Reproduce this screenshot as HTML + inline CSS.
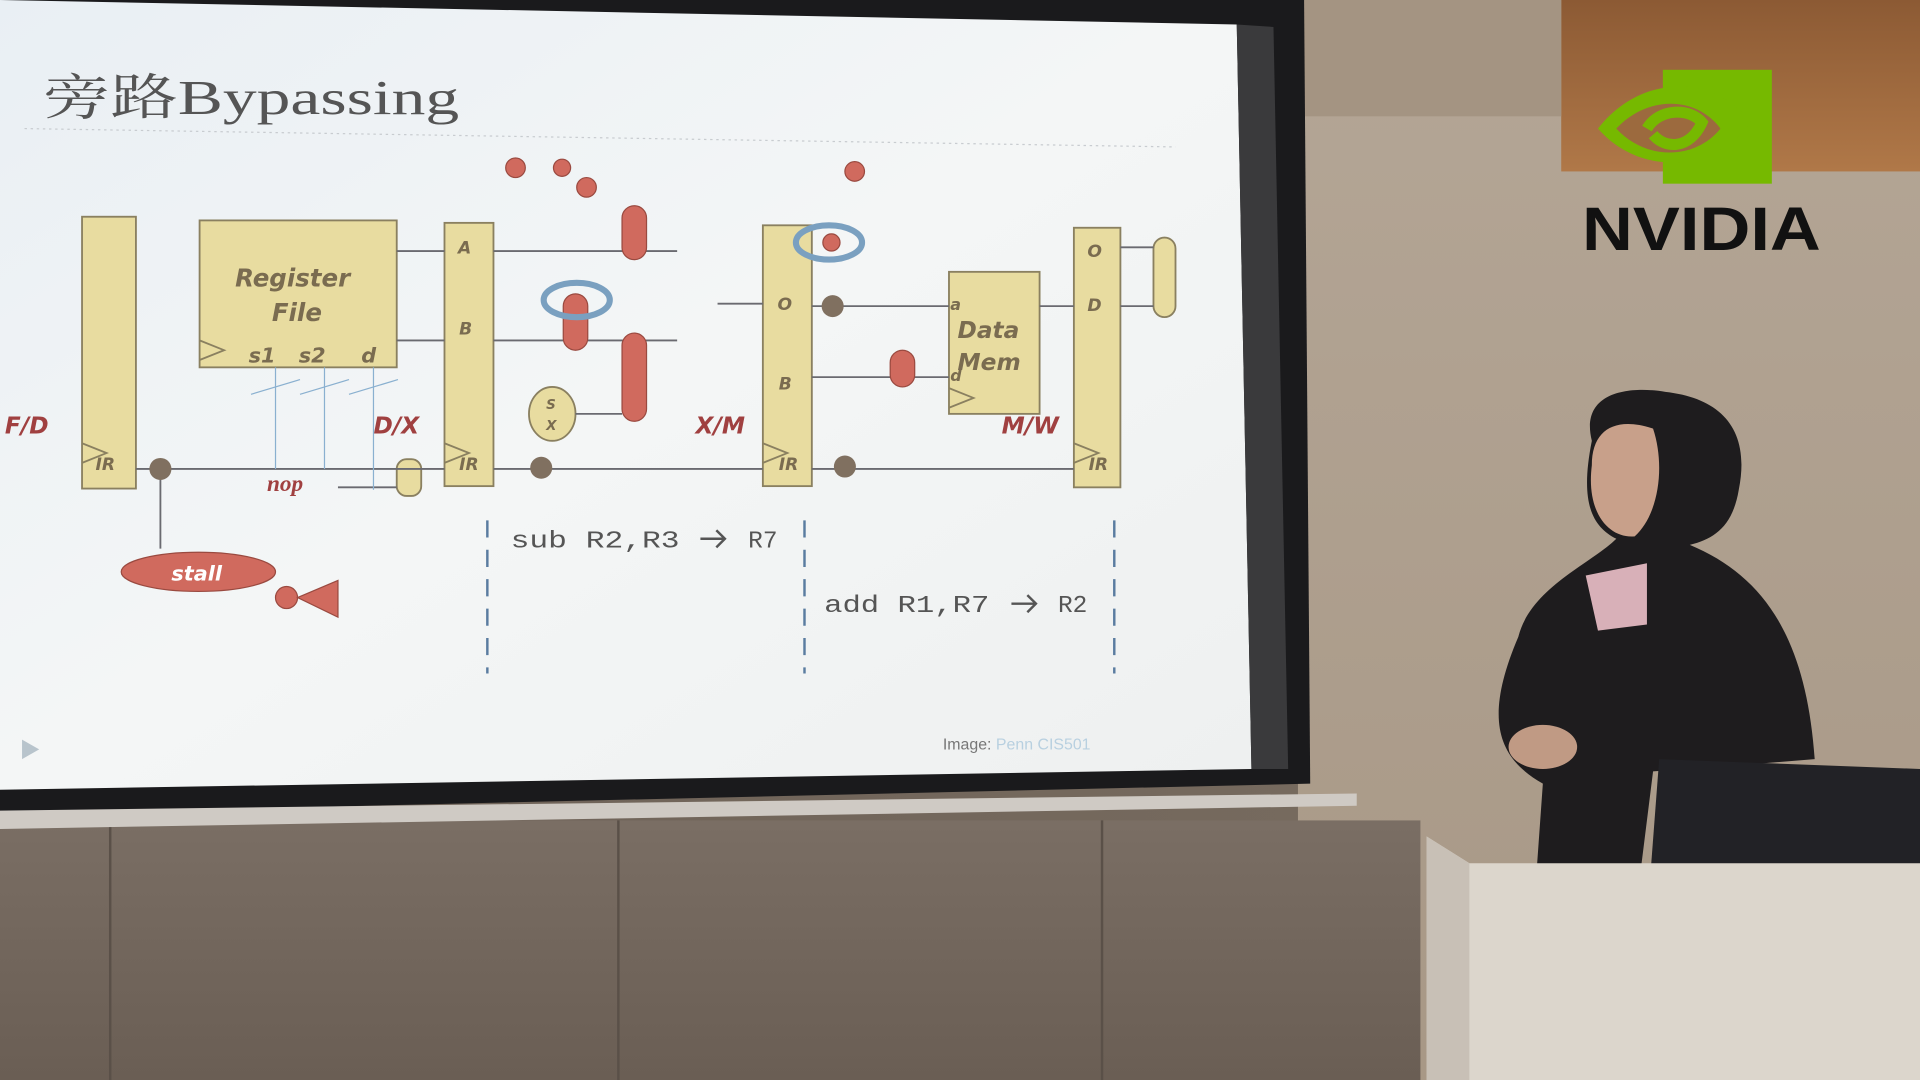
<!DOCTYPE html>
<html><head><meta charset="utf-8"><style>
html,body{margin:0;padding:0;width:1920px;height:1080px;overflow:hidden;background:#8a7c6e}
svg{display:block}
.it{font-family:"DejaVu Sans","Liberation Sans",sans-serif;font-style:italic;font-weight:bold}
.mono{font-family:"Liberation Mono",monospace}
</style></head><body>
<svg width="1920" height="1080" viewBox="0 0 1568 882" preserveAspectRatio="none" xmlns="http://www.w3.org/2000/svg">
<defs>
<linearGradient id="wall" x1="0" y1="0" x2="1" y2="0"><stop offset="0" stop-color="#6c6056"/><stop offset="0.7" stop-color="#766a5e"/><stop offset="1" stop-color="#8a7c6c"/></linearGradient>
<linearGradient id="rw" x1="0" y1="0" x2="0" y2="1"><stop offset="0" stop-color="#b4a696"/><stop offset="1" stop-color="#a89886"/></linearGradient>
<linearGradient id="slide" x1="0" y1="0" x2="1" y2="1"><stop offset="0" stop-color="#e9eff4"/><stop offset="0.5" stop-color="#f4f6f6"/><stop offset="1" stop-color="#eef0f0"/></linearGradient>
<linearGradient id="top" x1="0" y1="0" x2="0" y2="1"><stop offset="0" stop-color="#8c5a34"/><stop offset="1" stop-color="#b07848"/></linearGradient>
<linearGradient id="lw" x1="0" y1="0" x2="0" y2="1"><stop offset="0" stop-color="#7a6e64"/><stop offset="1" stop-color="#6a5e54"/></linearGradient>
</defs>
<rect width="1568" height="882" fill="url(#wall)"/>
<rect x="1060" y="0" width="508" height="882" fill="url(#rw)"/>
<rect x="1275" y="0" width="293" height="140" fill="url(#top)"/>
<rect x="1060" y="0" width="215" height="95" fill="#a49482"/>
<rect x="0" y="670" width="1160" height="212" fill="url(#lw)"/>
<line x1="90" y1="670" x2="90" y2="882" stroke="#5a5048" stroke-width="2"/>
<line x1="505" y1="670" x2="505" y2="882" stroke="#5a5048" stroke-width="2"/>
<line x1="900" y1="670" x2="900" y2="882" stroke="#5a5048" stroke-width="2"/>
<polygon points="0,0 1065,0 1070,640 0,665" fill="#1a1a1c"/>
<polygon points="0,662 1108,648 1108,658 0,677" fill="#cfcac4"/>
<polygon points="0,0 1010,20 1022,628 0,645" fill="url(#slide)"/>
<polygon points="1010,20 1040,22 1052,628 1022,628" fill="#3a3a3c"/>
<text x="35" y="93" font-family="'Liberation Serif','Noto Serif CJK SC',serif" font-size="40" fill="#555" textLength="340" lengthAdjust="spacingAndGlyphs">旁路Bypassing</text>
<line x1="20" y1="105" x2="960" y2="120" stroke="#c8ccd0" stroke-dasharray="2,3"/>
<g fill="#e8dca0" stroke="#8a8060" stroke-width="1.5">
<rect x="67" y="177" width="44" height="222"/>
<rect x="163" y="180" width="161" height="120"/>
<rect x="363" y="182" width="40" height="215"/>
<rect x="623" y="184" width="40" height="213"/>
<rect x="775" y="222" width="74" height="116"/>
<rect x="877" y="186" width="38" height="212"/>
<ellipse cx="451" cy="338" rx="19" ry="22"/>
<rect x="324" y="375" width="20" height="30" rx="8"/>
<rect x="942" y="194" width="18" height="65" rx="9"/>
</g>
<g fill="none" stroke="#8a8060" stroke-width="1.5">
<polyline points="163,278 183,286 163,294"/><polyline points="67,362 87,370 67,378"/><polyline points="363,362 383,370 363,378"/><polyline points="623,362 643,370 623,378"/><polyline points="877,362 897,370 877,378"/><polyline points="775,317 795,325 775,333"/>
</g>
<g class="it" fill="#7a6c50" font-size="17">
<text x="192" y="234" font-size="20">Register</text><text x="222" y="262" font-size="20">File</text>
<text x="203" y="296">s1</text><text x="244" y="296">s2</text><text x="295" y="296">d</text>
<text x="374" y="207" font-size="14">A</text><text x="375" y="273" font-size="14">B</text>
<text x="635" y="253" font-size="14">O</text><text x="636" y="318" font-size="14">B</text>
<text x="888" y="210" font-size="14">O</text><text x="888" y="254" font-size="14">D</text>
<text x="782" y="276" font-size="19">Data</text><text x="782" y="302" font-size="19">Mem</text>
<text x="776" y="253" font-size="13">a</text><text x="776" y="311" font-size="13">d</text>
<text x="78" y="384" font-size="14">IR</text><text x="375" y="384" font-size="14">IR</text><text x="636" y="384" font-size="14">IR</text><text x="889" y="384" font-size="14">IR</text>
<text x="446" y="334" font-size="11">S</text><text x="446" y="351" font-size="11">X</text>
</g>
<g class="it" fill="#a04040" font-size="19">
<text x="4" y="354">F/D</text><text x="305" y="354">D/X</text><text x="568" y="354">X/M</text><text x="818" y="354">M/W</text>
<text x="218" y="401" font-family="'Liberation Serif',serif">nop</text>
</g>
<g stroke="#6a6a70" stroke-width="1.5" fill="none">
<line x1="111" y1="383" x2="363" y2="383"/><line x1="403" y1="383" x2="623" y2="383"/><line x1="663" y1="383" x2="877" y2="383"/>
<line x1="131" y1="383" x2="131" y2="448"/>
<line x1="324" y1="205" x2="363" y2="205"/><line x1="324" y1="278" x2="363" y2="278"/>
<line x1="403" y1="205" x2="553" y2="205"/><line x1="403" y1="278" x2="553" y2="278"/>
<line x1="470" y1="338" x2="508" y2="338"/>
<line x1="586" y1="248" x2="623" y2="248"/>
<line x1="663" y1="250" x2="775" y2="250"/><line x1="663" y1="308" x2="775" y2="308"/>
<line x1="849" y1="250" x2="877" y2="250"/><line x1="915" y1="202" x2="942" y2="202"/><line x1="915" y1="250" x2="942" y2="250"/>
<line x1="276" y1="398" x2="324" y2="398"/>
</g>
<g stroke="#8ab0d0" stroke-width="1"><line x1="225" y1="300" x2="225" y2="383"/><line x1="265" y1="300" x2="265" y2="383"/><line x1="305" y1="300" x2="305" y2="400"/>
<line x1="205" y1="322" x2="245" y2="310"/><line x1="245" y1="322" x2="285" y2="310"/><line x1="285" y1="322" x2="325" y2="310"/></g>
<g fill="#d06a5e" stroke="#9a4a40" stroke-width="1">
<rect x="508" y="168" width="20" height="44" rx="10"/><rect x="460" y="240" width="20" height="46" rx="10"/>
<rect x="508" y="272" width="20" height="72" rx="10"/><rect x="727" y="286" width="20" height="30" rx="10"/>
<circle cx="421" cy="137" r="8"/><circle cx="459" cy="137" r="7"/><circle cx="479" cy="153" r="8"/><circle cx="698" cy="140" r="8"/><circle cx="679" cy="198" r="7"/>
<ellipse cx="162" cy="467" rx="63" ry="16"/>
<circle cx="234" cy="488" r="9"/><polygon points="243,488 276,474 276,504"/>
</g>
<text x="140" y="474" class="it" fill="#fff" font-size="17">stall</text>
<g fill="#807060"><circle cx="131" cy="383" r="9"/><circle cx="442" cy="382" r="9"/><circle cx="680" cy="250" r="9"/><circle cx="690" cy="381" r="9"/></g>
<g fill="none" stroke="#7aa0c0" stroke-width="5"><ellipse cx="471" cy="245" rx="27" ry="14"/><ellipse cx="677" cy="198" rx="27" ry="14"/></g>
<g stroke="#5a7ca0" stroke-width="2" stroke-dasharray="14,10"><line x1="398" y1="425" x2="398" y2="550"/><line x1="657" y1="425" x2="657" y2="550"/><line x1="910" y1="425" x2="910" y2="550"/></g>
<g class="mono" fill="#555" font-size="20"><text x="417" y="447" textLength="138" lengthAdjust="spacingAndGlyphs">sub R2,R3</text><text x="611" y="447">R7</text><text x="673" y="500" textLength="135" lengthAdjust="spacingAndGlyphs">add R1,R7</text><text x="864" y="500">R2</text></g>
<g stroke="#555" stroke-width="2" fill="none"><path d="M572,440 H592 M585,433 L592,440 L585,447"/><path d="M826,493 H846 M839,486 L846,493 L839,500"/></g>
<text x="770" y="612" font-family="'Liberation Sans',sans-serif" font-size="13" fill="#777">Image: <tspan fill="#b8d0e0">Penn CIS501</tspan></text>
<polygon points="18,604 32,612 18,620" fill="#b8c4cc"/>
<rect x="1358" y="57" width="89" height="93" fill="#76b900"/>
<path d="M1305,105 C1340,60 1400,60 1430,100 C1400,140 1340,145 1305,105 Z" fill="#76b900"/>
<path d="M1320,105 C1345,78 1385,78 1405,105 C1385,130 1345,132 1320,105 Z" fill="#9c6a3e"/>
<path d="M1345,105 C1355,88 1380,88 1390,100 C1380,122 1360,122 1350,110" fill="none" stroke="#76b900" stroke-width="9"/>
<text x="1292" y="204" font-family="'Liberation Sans',sans-serif" font-weight="bold" font-size="50" fill="#111" textLength="195" lengthAdjust="spacingAndGlyphs">NVIDIA</text>
<path d="M1300,360 C1290,320 1330,315 1360,320 C1405,325 1430,350 1420,400 C1415,430 1400,440 1380,445 C1440,470 1475,520 1482,620 L1420,625 L1350,630 L1340,710 L1255,710 L1260,640 C1225,620 1210,590 1240,520 C1250,480 1300,460 1320,440 C1300,430 1290,410 1300,360 Z" fill="#1e1c1e"/>
<path d="M1300,380 C1300,350 1320,340 1350,350 C1360,380 1355,420 1335,438 C1315,440 1295,420 1300,380 Z" fill="#c8a08a"/>
<path d="M1295,470 L1345,460 L1345,510 L1305,515 Z" fill="#d8b0b8"/>
<ellipse cx="1260" cy="610" rx="28" ry="18" fill="#c09a84"/>
<polygon points="1355,620 1568,628 1568,712 1348,712" fill="#222226"/>
<polygon points="1165,683 1200,705 1568,705 1568,882 1165,882" fill="#dcd6cc"/>
<polygon points="1165,683 1200,705 1200,882 1165,882" fill="#c8c0b6"/>
</svg>
</body></html>
